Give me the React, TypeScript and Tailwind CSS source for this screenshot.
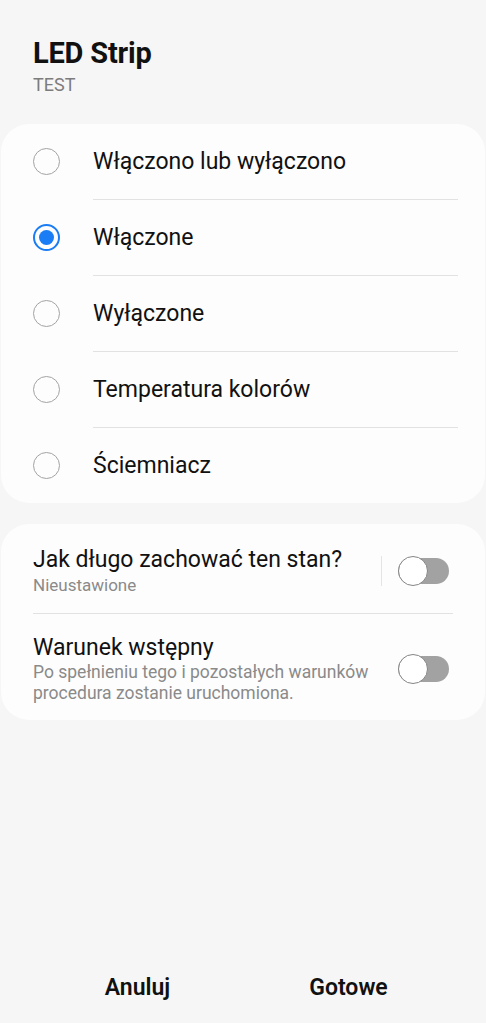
import React from 'react';

const options = [
  'Włączono lub wyłączono',
  'Włączone',
  'Wyłączone',
  'Temperatura kolorów',
  'Ściemniacz',
];

function Radio({ checked }: { checked: boolean }) {
  if (checked) {
    return (
      <div className="flex h-[27px] w-[27px] items-center justify-center rounded-full border-2 border-[#1a7df5]">
        <div className="h-[15px] w-[15px] rounded-full bg-[#1a7df5]" />
      </div>
    );
  }
  return <div className="h-[27px] w-[27px] rounded-full border-[1.5px] border-[#a3a3a3]" />;
}

function Toggle() {
  return (
    <div className="relative mr-[4px] h-[26px] w-[51px] rounded-full bg-[#a2a2a2]">
      <div className="absolute left-0 top-[-2px] h-[30px] w-[30px] rounded-full border-[1.5px] border-[#858585] bg-white" />
    </div>
  );
}

export default function App() {
  const selected = 1;
  return (
    <div
      className="flex h-[1023px] flex-col bg-[#f6f6f6] text-[#111]"
      style={{ fontFamily: 'Roboto, "Noto Sans", sans-serif' }}
    >
      <div className="px-[33px] pt-[36px]">
        <h1 className="text-[29px] font-bold leading-[34px] tracking-[-0.2px]">LED Strip</h1>
        <p className="mt-[4px] text-[18px] leading-[22px] text-[#7c7c7c]">TEST</p>
      </div>

      <div className="mx-[1px] mt-[28px] rounded-[28px] bg-[#fdfdfd]">
        {options.map((label, i) => (
          <div key={label}>
            {i > 0 && <div className="ml-[92px] mr-[27px] h-px bg-[#e2e2e2]" />}
            <div className="flex h-[75px] items-center">
              <div className="flex w-[92px] justify-center pr-[2px]">
                <Radio checked={i === selected} />
              </div>
              <span className="text-[23px] leading-[28px]">{label}</span>
            </div>
          </div>
        ))}
      </div>

      <div className="mx-[1px] mt-[21px] rounded-[28px] bg-[#fdfdfd] px-[32px]">
        <div className="flex items-center pb-[17px] pt-[22px]">
          <div className="flex-1">
            <p className="text-[23px] leading-[28px]">Jak długo zachować ten stan?</p>
            <p className="text-[17px] leading-[22px] text-[#8a8a8a]">Nieustawione</p>
          </div>
          <div className="mr-[16px] h-[30px] w-px bg-[#e4e4e4]" />
          <Toggle />
        </div>
        <div className="h-px bg-[#e2e2e2]" />
        <div className="flex items-center pb-[16px] pt-[20px]">
          <div className="flex-1">
            <p className="text-[23px] leading-[28px]">Warunek wstępny</p>
            <p className="text-[17.5px] leading-[21px] text-[#8a8a8a]">
              Po spełnieniu tego i pozostałych warunków
              <br />
              procedura zostanie uruchomiona.
            </p>
          </div>
          <Toggle />
        </div>
      </div>

      <div className="flex-1" />

      <div className="flex px-[32px] pb-[10px]">
        <button className="flex-1 py-[8px] text-[23px] font-semibold">Anuluj</button>
        <button className="flex-1 py-[8px] text-[23px] font-semibold">Gotowe</button>
      </div>
    </div>
  );
}
